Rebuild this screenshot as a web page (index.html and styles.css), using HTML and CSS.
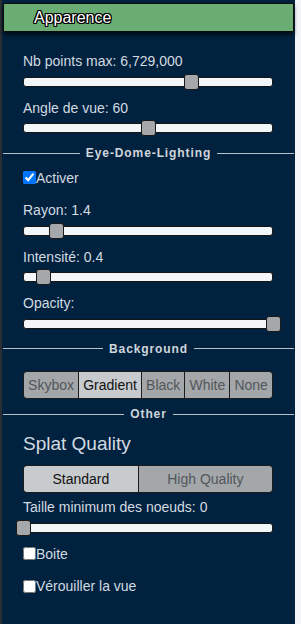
FILE: index.html
```html
<!DOCTYPE html>
<html>
<head>
<meta charset="utf-8">
<link rel="stylesheet" href="styles.css">
</head>
<body>
<div class="panel">
  <div class="header"><span class="title">Apparence</span></div>

  <div class="field first">
    <div class="label">Nb points max: 6,729,000</div>
    <div class="slider"><div class="track"></div><div class="thumb" style="--v:67.4%"></div></div>
  </div>
  <div class="field">
    <div class="label">Angle de vue: 60</div>
    <div class="slider"><div class="track"></div><div class="thumb" style="--v:50%"></div></div>
  </div>

  <div class="heading"><span class="line"></span><span class="htext">Eye-Dome-Lighting</span><span class="line"></span></div>

  <label class="check first-check"><input type="checkbox" checked>Activer</label>

  <div class="field">
    <div class="label">Rayon: 1.4</div>
    <div class="slider"><div class="track"></div><div class="thumb" style="--v:13.4%"></div></div>
  </div>
  <div class="field">
    <div class="label">Intensité: 0.4</div>
    <div class="slider"><div class="track"></div><div class="thumb" style="--v:8.2%"></div></div>
  </div>
  <div class="field">
    <div class="label">Opacity:</div>
    <div class="slider"><div class="track"></div><div class="thumb" style="--v:100%"></div></div>
  </div>

  <div class="heading"><span class="line"></span><span class="htext">Background</span><span class="line"></span></div>

  <div class="seg bg-seg">
    <span class="opt">Skybox</span>
    <span class="opt active">Gradient</span>
    <span class="opt">Black</span>
    <span class="opt">White</span>
    <span class="opt">None</span>
  </div>

  <div class="heading other"><span class="line"></span><span class="htext">Other</span><span class="line"></span></div>

  <div class="big">Splat Quality</div>

  <div class="seg quality">
    <span class="opt active">Standard</span>
    <span class="opt">High Quality</span>
  </div>

  <div class="field taille">
    <div class="label">Taille minimum des noeuds: 0</div>
    <div class="slider"><div class="track"></div><div class="thumb" style="--v:0%"></div></div>
  </div>

  <label class="check"><input type="checkbox">Boite</label>
  <label class="check"><input type="checkbox">Vérouiller la vue</label>
</div>
</body>
</html>
```

FILE: styles.css
```css
html, body {
  margin: 0;
  padding: 0;
}
body {
  background: #f3f6f9;
  font-family: "Liberation Sans", Arial, sans-serif;
  width: 301px;
  height: 624px;
  overflow: hidden;
}
.panel {
  width: 295px;
  height: 624px;
  box-sizing: border-box;
  background: #00223f;
  border-left: 2px solid #2b2f33;
  padding: 3px 1px 0 1px;
  color: #d3dae0;
}
.header {
  height: 29px;
  box-sizing: border-box;
  background: #6aad72;
  border: 1px solid #0a0a0a;
  box-shadow: 0 3px 4px rgba(0, 0, 0, 0.6);
  padding-left: 30px;
  line-height: 27px;
  font-size: 16px;
}
.title {
  color: #fff;
  text-shadow: -1px 0 #000, 1px 0 #000, 0 -1px #000, 0 1px #000,
    -1px -1px #000, 1px 1px #000, -1px 1px #000, 1px -1px #000;
}
.field {
  margin: 0 21px 10px 20px;
}
.field.first {
  margin-top: 21.4px;
}
.label {
  font-size: 14px;
  line-height: 16px;
  margin-bottom: 4.5px;
  white-space: nowrap;
}
.slider {
  position: relative;
  height: 16px;
}
.track {
  position: relative;
  top: 3px;
  height: 10px;
  box-sizing: border-box;
  background: #f3f6f9;
  border: 1px solid #151515;
  border-radius: 3px;
}
.thumb {
  position: absolute;
  top: 0;
  left: calc(var(--v) - 7.5px);
  width: 15px;
  height: 16px;
  box-sizing: border-box;
  background: #a5a8aa;
  border: 1px solid #1a1a1a;
  border-radius: 3px;
}
.heading {
  display: flex;
  align-items: center;
  gap: 6px;
  height: 14px;
  margin-top: 0.6px;
}
.heading .line {
  flex: 1;
  height: 1px;
  background: #b9c0c6;
}
.htext {
  font-size: 12px;
  font-weight: bold;
  letter-spacing: 0.9px;
  line-height: 14px;
  color: #cfd6dc;
}
.check {
  display: flex;
  align-items: center;
  height: 16px;
  margin: 0 21px 16.5px 20px;
  font-size: 14px;
  line-height: 16px;
}
.check.first-check {
  margin-top: 9.3px;
}
.check input {
  margin: 0;
  width: 13px;
  height: 13px;
}
.seg {
  display: flex;
  margin: 15.5px 21px 0 20px;
  height: 28px;
  box-sizing: border-box;
  border: 1px solid #1c1c1c;
  border-radius: 4px;
  overflow: hidden;
  font-size: 14px;
}
.opt {
  flex: 1 1 auto;
  display: flex;
  align-items: center;
  justify-content: center;
  background: #a4a7a9;
  color: #51565b;
  border-left: 1px solid #1c1c1c;
  white-space: nowrap;
}
.opt:first-child {
  border-left: none;
}
.opt.active {
  background: #c8cbcd;
  color: #111;
}
.heading.other {
  margin-top: 8px;
}
.big {
  margin: 11.4px 21px 0 20px;
  font-size: 19px;
  line-height: 22px;
}
.seg.quality {
  margin-top: 10.6px;
}
.field.taille {
  margin-top: 6px;
}
```
